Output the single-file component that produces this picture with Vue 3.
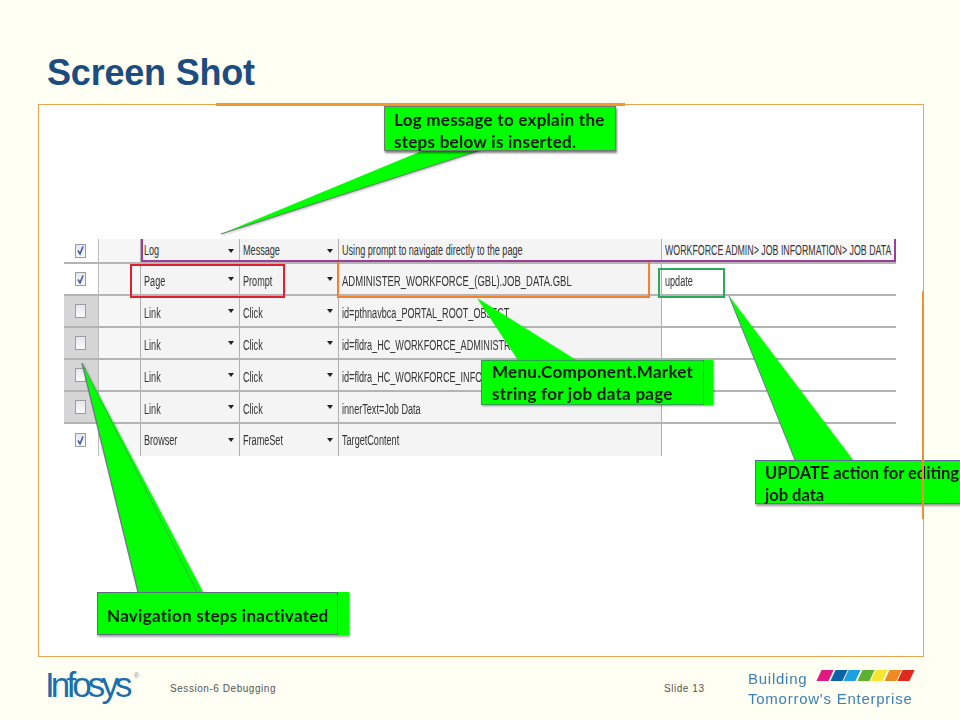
<script setup>
const rows = [
  { checked: true, type: 'Log', action: 'Message', target: 'Using prompt to navigate directly to the page', value: 'WORKFORCE ADMIN> JOB INFORMATION> JOB DATA' },
  { checked: true, type: 'Page', action: 'Prompt', target: 'ADMINISTER_WORKFORCE_(GBL).JOB_DATA.GBL', value: 'update' },
  { checked: false, type: 'Link', action: 'Click', target: 'id=pthnavbca_PORTAL_ROOT_OBJECT', value: '' },
  { checked: false, type: 'Link', action: 'Click', target: 'id=fldra_HC_WORKFORCE_ADMINISTRATION', value: '' },
  { checked: false, type: 'Link', action: 'Click', target: 'id=fldra_HC_WORKFORCE_INFO', value: '' },
  { checked: false, type: 'Link', action: 'Click', target: 'innerText=Job Data', value: '' },
  { checked: true, type: 'Browser', action: 'FrameSet', target: 'TargetContent', value: '' },
]

const stripes = ['#e0187f', '#0a62a8', '#1ea0e0', '#5fb030', '#f5e631', '#f08a24', '#e02a20']
</script>

<template>
  <div class="slide">
    <h1 class="title">Screen Shot</h1>

    <div class="panel">
      <div class="steps">
        <div
          v-for="(row, i) in rows"
          :key="i"
          class="row"
          :class="{ first: i === 0, last: i === rows.length - 1 }"
        >
          <div class="cell check" :class="{ off: !row.checked }">
            <span class="box">
              <svg v-if="row.checked" width="9" height="11" viewBox="0 0 9 11">
                <path d="M2 5.5 L4 9 L7 1.5" fill="none" stroke="#3b5ea8" stroke-width="1.6" />
              </svg>
            </span>
          </div>
          <div class="cell spacer"></div>
          <div class="cell select"><span class="txt">{{ row.type }}</span><i class="arrow"></i></div>
          <div class="cell select"><span class="txt">{{ row.action }}</span><i class="arrow"></i></div>
          <div class="cell target"><span class="txt">{{ row.target }}</span></div>
          <div class="cell value" :class="{ wide: i === 0 }"><span class="txt">{{ row.value }}</span></div>
        </div>
      </div>
    </div>

    <!-- rectangles drawn over the grid -->
    <div class="mark mark-purple"></div>
    <div class="mark mark-orange"></div>
    <div class="mark mark-red"></div>
    <div class="mark mark-green"></div>
    <div class="top-rule"></div>

    <svg class="pointers" width="960" height="720" viewBox="0 0 960 720">
      <polygon points="221,234 424,150 481,150" fill="#00ff00" />
      <path d="M221,234 L481,150" fill="none" stroke="#6f7f78" stroke-width="1.2" />
      <polygon points="477,298 518,360 576,360" fill="#00ff00" />
      <polygon points="729,296 795,460 853,460" fill="#00ff00" />
      <path d="M729,296 L795,460" fill="none" stroke="#6d7a90" stroke-width="1" />
      <polygon points="82,363 138,592 203,592" fill="#00ff00" />
      <path d="M82,363 L138,592" fill="none" stroke="#75708f" stroke-width="1.2" />
      <path d="M82,363 L197,592" fill="none" stroke="#4f9a60" stroke-width="0.8" />
    </svg>

    <div class="callout log-note">
      Log message to explain the<br />steps below is inserted.
    </div>
    <div class="callout menu-note">
      <span class="frame"></span>
      Menu.Component.Market<br />string for job data page
    </div>
    <div class="callout update-note">
      UPDATE action for editing<br />job data
    </div>
    <div class="callout nav-note">
      <span class="frame"></span>
      Navigation steps inactivated
    </div>
    <div class="side-rule"></div>

    <footer class="footer">
      <div class="logo">Infosys<sup>®</sup></div>
      <div class="small">Session-6 Debugging</div>
      <div class="small">Slide 13</div>
      <div class="tagline">
        <div class="tag-top">
          <span class="tag-word">Building</span>
          <div class="stripes">
            <i v-for="c in stripes" :key="c" :style="{ background: c }"></i>
          </div>
        </div>
        <div>Tomorrow's Enterprise</div>
      </div>
    </footer>
  </div>
</template>

<style scoped>
.slide {
  position: relative;
  width: 960px;
  height: 720px;
  overflow: hidden;
  background: #fffff3;
  font-family: 'Liberation Sans', Arial, sans-serif;
}

.title {
  margin: 0;
  height: 104px;
  box-sizing: border-box;
  padding: 52px 0 0 47px;
  font-size: 36px;
  line-height: 42px;
  font-weight: 700;
  letter-spacing: -0.2px;
  color: #1d4c80;
}

.panel {
  box-sizing: border-box;
  width: 886px;
  height: 553px;
  margin-left: 38px;
  padding: 134px 0 0 25px;
  background: #fff;
  border: 1px solid #e8a552;
}

.steps {
  width: 832px;
  font-size: 14px;
  color: #333;
  filter: blur(0.35px);
}

.row {
  display: grid;
  grid-template-columns: 34px 42px 99px 99px 323px 235px;
  height: 32px;
}

.row.first {
  height: 25px;
}

.cell {
  position: relative;
  display: flex;
  align-items: center;
  box-sizing: border-box;
  border-bottom: 2px solid #b4b4b4;
  white-space: nowrap;
}

.row.last .cell {
  border-bottom: 0;
}

.txt {
  display: inline-block;
  margin-top: 4px;
  transform: scaleX(0.65);
  transform-origin: left center;
}

.row.first .txt {
  margin-top: -2px;
}

.row.first .value .txt {
  transform: scaleX(0.63);
}

.row.last .txt {
  margin-top: 0;
}

.row:nth-child(2) .target .txt {
  transform: scaleX(0.68);
}

.check {
  justify-content: center;
  padding-right: 2px;
  background: #fff;
}

.check.off {
  background: #d6d6d6;
}

.box {
  display: flex;
  align-items: center;
  justify-content: center;
  width: 11px;
  height: 14px;
  box-sizing: border-box;
  border: 1px solid #9a9aa8;
  background: linear-gradient(#e6e6ea, #fbfbfb);
}

.spacer {
  border-left: 1px solid #bdbdbd;
  background: #f7f7f7;
}

.select,
.target {
  padding-left: 3px;
  border-left: 1px solid #b0b0b0;
  background: #f4f4f4;
}

.arrow {
  position: absolute;
  right: 5px;
  top: 50%;
  margin-top: -2px;
  border-left: 3px solid transparent;
  border-right: 3px solid transparent;
  border-top: 4px solid #222;
}

.value {
  padding-left: 3px;
  border-left: 1px solid #b0b0b0;
  background: #fff;
}

.value.wide {
  background: #f8f8f8;
}

.mark {
  position: absolute;
  box-sizing: border-box;
}

.mark-purple {
  left: 141px;
  top: 239px;
  width: 755px;
  height: 23px;
  border: 2px solid #9a3d9c;
  border-top: 0;
}

.mark-orange {
  left: 337px;
  top: 262px;
  width: 313px;
  height: 36px;
  border: 2px solid #f5822a;
  border-top: 0;
}

.mark-red {
  left: 130px;
  top: 264px;
  width: 155px;
  height: 34px;
  border: 2px solid #e02030;
}

.mark-green {
  left: 658px;
  top: 268px;
  width: 67px;
  height: 30px;
  border: 2px solid #2ea85a;
}

.top-rule {
  position: absolute;
  left: 216px;
  top: 103px;
  width: 409px;
  height: 3px;
  background: #f09a2a;
}

.side-rule {
  position: absolute;
  left: 922px;
  top: 291px;
  width: 2px;
  height: 228px;
  background: #f09030;
}

.pointers {
  position: absolute;
  left: 0;
  top: 0;
  filter: drop-shadow(1px 1px 1px rgba(0, 0, 0, 0.25));
}

.callout {
  position: absolute;
  box-sizing: border-box;
  background: #00ff00;
  color: #0a1a0a;
  font-family: Lato, 'Open Sans', sans-serif;
  font-size: 17px;
  font-weight: 700;
  letter-spacing: 0.27px;
  line-height: 22px;
  white-space: nowrap;
}

.log-note {
  left: 384px;
  top: 106px;
  width: 232px;
  height: 45px;
  padding: 2px 0 0 9px;
  border: 1px solid #6e7a70;
  box-shadow: 1px 2px 2px rgba(0, 0, 0, 0.5);
}

.menu-note {
  left: 481px;
  top: 360px;
  width: 232px;
  height: 45px;
  padding: 1px 0 0 11px;
  box-shadow: 1px 1px 2px rgba(0, 0, 0, 0.4);
}

.update-note {
  left: 755px;
  top: 460px;
  width: 225px;
  height: 44px;
  padding: 1px 0 0 9px;
  border: 1px solid #6a62a0;
  border-right: 0;
  font-size: 16.5px;
  letter-spacing: 0;
  box-shadow: 1px 2px 2px rgba(0, 0, 0, 0.4);
}

.nav-note {
  left: 97px;
  top: 592px;
  width: 252px;
  height: 43px;
  padding: 13px 0 0 10px;
  box-shadow: 1px 2px 2px rgba(0, 0, 0, 0.35);
}

.frame {
  position: absolute;
  left: 0;
  top: 0;
  bottom: 0;
  box-sizing: border-box;
  border: 1px solid #5f6a80;
}

.menu-note .frame {
  width: 223px;
  border-color: #2fa050;
}

.nav-note .frame {
  width: 241px;
}

.footer {
  display: grid;
  grid-template-columns: 123px 494px 84px 1fr;
  align-items: center;
  height: 63px;
  padding-left: 47px;
}

.logo {
  margin: -8px 0 0 -2px;
  font-size: 35px;
  line-height: 40px;
  letter-spacing: -3.9px;
  color: #1b6fad;
}

.logo sup {
  font-size: 8px;
  line-height: 0;
  letter-spacing: 0;
  color: #999;
  vertical-align: 19px;
  margin-left: 5px;
}

.small {
  font-size: 10px;
  letter-spacing: 0.55px;
  color: #555;
}

.tagline {
  font-size: 15px;
  line-height: 20px;
  letter-spacing: 0.75px;
  color: #3d80b6;
  filter: blur(0.4px);
}

.tag-top {
  display: flex;
  align-items: center;
}

.tag-word {
  width: 71px;
}

.stripes {
  display: flex;
  gap: 2px;
  margin-top: -6px;
}

.stripes i {
  width: 11.5px;
  height: 11px;
  transform: skewX(-25deg);
}
</style>

<style>
html,
body {
  margin: 0;
  background: #fffff3;
}
</style>
